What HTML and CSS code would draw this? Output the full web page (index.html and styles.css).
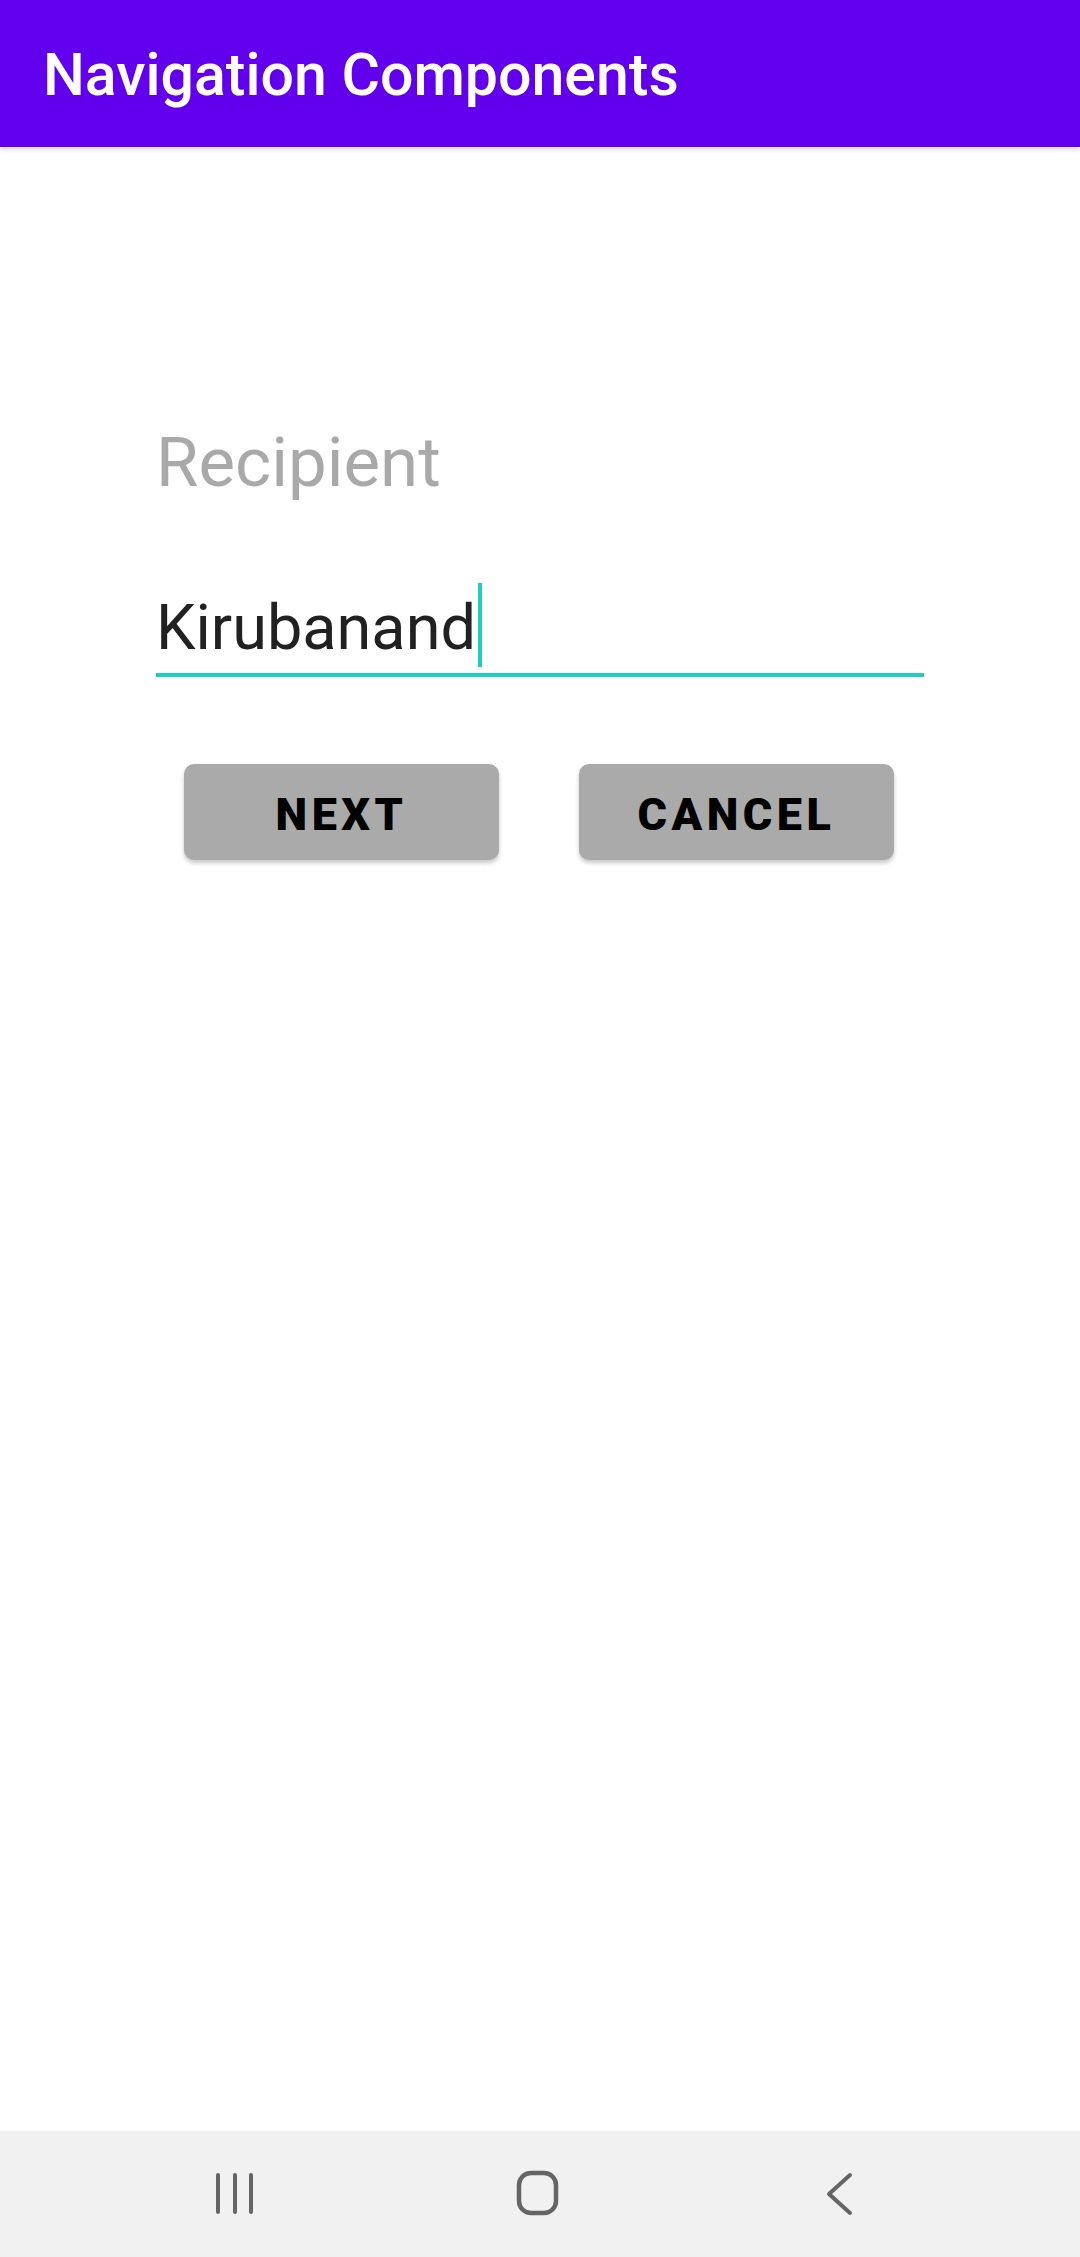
FILE: index.html
```html
<!DOCTYPE html>
<html>
<head>
<meta charset="utf-8">
<link rel="stylesheet" href="styles.css">
</head>
<body>
<header class="appbar"><span class="title">Navigation Components</span></header>
<main class="content">
  <div class="label">Recipient</div>
  <div class="field"><span class="value">Kirubanand</span><span class="cursor"></span></div>
  <div class="buttons">
    <div class="btn">NEXT</div>
    <div class="btn">CANCEL</div>
  </div>
</main>
<nav class="navbar">
  <div class="navbtn">
    <svg width="100" height="60" viewBox="0 0 100 60"><g stroke="#656565" stroke-width="4" stroke-linecap="round"><line x1="33" y1="11" x2="33" y2="48"/><line x1="50" y1="11" x2="50" y2="48"/><line x1="66" y1="11" x2="66" y2="48"/></g></svg>
  </div>
  <div class="navbtn">
    <svg width="100" height="60" viewBox="0 0 100 60"><rect x="32" y="9" width="37" height="40" rx="12" fill="none" stroke="#656565" stroke-width="4.5"/></svg>
  </div>
  <div class="navbtn">
    <svg width="100" height="60" viewBox="0 0 100 60"><polyline points="61,11 40,30 61,49" fill="none" stroke="#656565" stroke-width="4" stroke-linecap="round" stroke-linejoin="round"/></svg>
  </div>
</nav>
</body>
</html>
```
FILE: styles.css
```css
html, body {
  margin: 0;
  padding: 0;
}
body {
  font-family: Roboto, "Noto Sans", sans-serif;
  background: #ffffff;
  display: flex;
  flex-direction: column;
  min-height: 100vh;
}
.appbar {
  height: 147px;
  background: #6200ee;
  display: flex;
  align-items: center;
  padding-left: 43px;
  box-sizing: border-box;
  box-shadow: 0 2px 5px rgba(0,0,0,0.18);
  position: relative;
  z-index: 1;
}
.title {
  color: #ffffff;
  font-size: 59px;
  font-weight: 500;
  line-height: 64px;
  margin-top: 2px;
}
.content {
  flex: 1;
  padding-left: 156px;
}
.label {
  margin-top: 276px;
  font-size: 69px;
  line-height: 80px;
  color: #a9a9a9;
}
.field {
  width: 768px;
  margin-top: 80px;
  display: flex;
  align-items: flex-end;
  padding-bottom: 5px;
  border-bottom: 4px solid #1ecfc0;
}
.value {
  font-size: 63px;
  line-height: 80px;
  color: #212121;
}
.cursor {
  width: 4px;
  height: 84px;
  background: #1ecfc0;
  margin-bottom: 1px;
  margin-left: 2px;
}
.buttons {
  display: flex;
  gap: 80px;
  margin-top: 87px;
  margin-left: 28px;
}
.btn {
  width: 315px;
  height: 96px;
  background: #aaaaaa;
  border-radius: 10px;
  box-shadow: 0 3px 4px rgba(0,0,0,0.22);
  display: flex;
  align-items: center;
  justify-content: center;
  padding-top: 4px;
  box-sizing: border-box;
  font-size: 45px;
  font-weight: 900;
  letter-spacing: 0.1em;
  color: #000000;
}
.navbar {
  height: 126px;
  background: #f1f1f1;
  display: flex;
  align-items: center;
  padding-left: 185px;
  gap: 202px;
}
.navbtn {
  width: 100px;
  height: 60px;
  display: flex;
}
```
